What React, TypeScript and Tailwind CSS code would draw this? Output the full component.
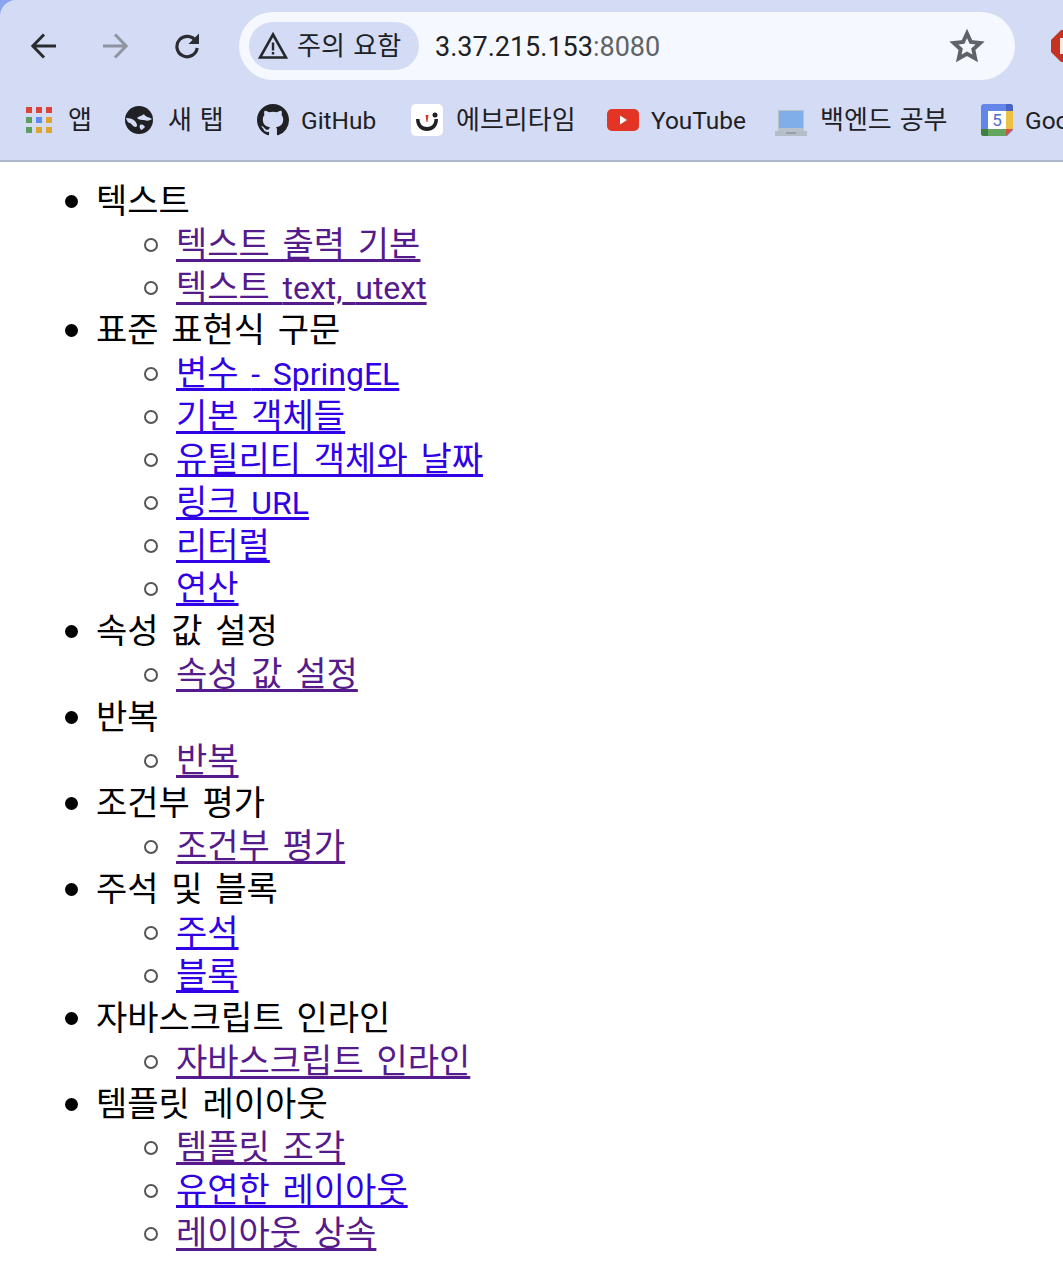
const font = "font-['Malgun_Gothic','Noto_Sans_CJK_KR','Noto_Sans',sans-serif]";

type Item = { text: string; visited: boolean };
type Section = { title: string; items: Item[] };

const sections: Section[] = [
  {
    title: "텍스트",
    items: [
      { text: "텍스트 출력 기본", visited: true },
      { text: "텍스트 text, utext", visited: true },
    ],
  },
  {
    title: "표준 표현식 구문",
    items: [
      { text: "변수 - SpringEL", visited: false },
      { text: "기본 객체들", visited: false },
      { text: "유틸리티 객체와 날짜", visited: false },
      { text: "링크 URL", visited: false },
      { text: "리터럴", visited: false },
      { text: "연산", visited: false },
    ],
  },
  { title: "속성 값 설정", items: [{ text: "속성 값 설정", visited: true }] },
  { title: "반복", items: [{ text: "반복", visited: true }] },
  { title: "조건부 평가", items: [{ text: "조건부 평가", visited: true }] },
  {
    title: "주석 및 블록",
    items: [
      { text: "주석", visited: false },
      { text: "블록", visited: false },
    ],
  },
  { title: "자바스크립트 인라인", items: [{ text: "자바스크립트 인라인", visited: true }] },
  {
    title: "템플릿 레이아웃",
    items: [
      { text: "템플릿 조각", visited: true },
      { text: "유연한 레이아웃", visited: false },
      { text: "레이아웃 상속", visited: true },
    ],
  },
];

// hangul runs bigger than latin in the screenshot's font, so latin gets its own span
function Mixed({ text }: { text: string }) {
  return (
    <>
      {text.split(/([A-Za-z,\-]+)/).map((part, i) =>
        i % 2 === 1 ? (
          <span key={i} className="font-['Roboto',sans-serif] text-[0.94em] leading-none">
            {part}
          </span>
        ) : (
          part
        )
      )}
    </>
  );
}

function Bookmark({ icon, label, className }: { icon: React.ReactNode; label: string; className: string }) {
  return (
    <div className={`flex shrink-0 items-center ${className}`}>
      {icon}
      <span className="-translate-y-[2px] whitespace-nowrap text-[26px] leading-[32px] text-[#1f2024] [word-spacing:0.08em]">
        <Mixed text={label} />
      </span>
    </div>
  );
}

function Toolbar() {
  return (
    <div className="relative h-[162px] overflow-hidden border-b-2 border-[#aeb6cb] bg-[#d3dcf4]">
      <div className="flex h-[92px] items-center">
        <svg className="ml-[31px] size-[26px]" viewBox="0 0 26 26" fill="none" stroke="#2a2c30" strokeWidth="3">
          <path d="M25 13H2M13 1.5 1.8 13 13 24.5" />
        </svg>
        <svg className="ml-[45px] size-[26px]" viewBox="0 0 26 26" fill="none" stroke="#8f949f" strokeWidth="3">
          <path d="M1 13h23M13 1.5 24.2 13 13 24.5" />
        </svg>
        <svg className="ml-[46px] size-[26px]" viewBox="0 0 26 26" fill="none" stroke="#2a2c30" strokeWidth="3.2">
          <path d="M22 8.5A10.2 10.2 0 1 0 23.2 15" />
          <path d="M25 0.5v10.5h-10.5z" fill="#2a2c30" stroke="none" />
        </svg>
        <div className="ml-[39px] flex h-[68px] w-[776px] shrink-0 items-center rounded-full bg-[#f5f8fe] pl-[10px] pr-[30px]">
          <div className="flex h-[48px] w-[170px] shrink-0 items-center rounded-full bg-[#d3dcf4] pl-[9px]">
            <svg className="size-[30px]" viewBox="0 0 30 30" fill="none">
              <path d="M15 3.5 28 26.5H2Z" stroke="#25272b" strokeWidth="2.6" />
              <path d="M13.8 11.5h2.4v8h-2.4zM13.8 21h2.4v2.5h-2.4z" fill="#25272b" />
            </svg>
            <span className="ml-[9px] -translate-y-[2px] whitespace-nowrap text-[26px] leading-[32px] text-[#202124] [word-spacing:0.1em]">
              주의 요함
            </span>
          </div>
          <span className="ml-[16px] translate-y-[1px] font-['Roboto',sans-serif] text-[27px] leading-[36px] text-[#202124]">
            3.37.215.153<span className="text-[#5f6368]">:8080</span>
          </span>
          <svg className="ml-auto size-[36px]" viewBox="0 0 24 24" fill="none" stroke="#5f6368" strokeWidth="2.6">
            <path d="m12 3.6 2.6 5.7 6.2.7-4.6 4.2 1.3 6.1-5.5-3.1-5.5 3.1 1.3-6.1-4.6-4.2 6.2-.7Z" />
          </svg>
        </div>
      </div>
      <svg className="absolute right-[-20px] top-[30px] size-[32px]" viewBox="0 0 32 32">
        <path d="M10 0h12l10 10v12L22 32H10L0 22V10Z" fill="#c5321f" />
        <path d="M9 8h4v12h3v4H9Z" fill="#f6e8e4" />
      </svg>
      <svg className="pointer-events-none absolute left-0 top-0 size-[16px]" viewBox="0 0 16 16">
        <path d="M0 0h16A16 16 0 0 0 0 16Z" fill="#8aa4ee" />
      </svg>
      <div className="flex h-[56px] items-center">
        <Bookmark
          className="ml-[25px] w-[100px]"
          label="앱"
          icon={
            <svg className="mr-[15px] size-[28px]" viewBox="0 0 28 28">
              <path d="M1 1h6v6H1z" fill="#db4437" /><path d="M11 1h6v6h-6z" fill="#db4437" /><path d="M21 1h6v6h-6z" fill="#db4437" />
              <path d="M1 11h6v6H1z" fill="#5f9e5f" /><path d="M11 11h6v6h-6z" fill="#5b8def" /><path d="M21 11h6v6h-6z" fill="#e0a531" />
              <path d="M1 21h6v6H1z" fill="#5f9e5f" /><path d="M11 21h6v6h-6z" fill="#e0a531" /><path d="M21 21h6v6h-6z" fill="#e0a531" />
            </svg>
          }
        />
        <Bookmark
          className="w-[132px]"
          label="새 탭"
          icon={
            <svg className="mr-[15px] size-[28px]" viewBox="0 0 28 28">
              <circle cx="14" cy="14" r="14" fill="#202124" />
              <path d="M1 12c4 0 7 1 9 3 2 3 3 5 1 6-3 0-4-3-6-4-2 0-3-2-4-5ZM12 12c2-2 5-2 7-4 1 3 5 3 8 5-3 2-5 2-8 1-2 0-5 0-7-2ZM15 19c2-1 4 0 5 2-2 2-3 3-4 3-1-2-2-3-1-5Z" fill="#d3dcf4" />
            </svg>
          }
        />
        <Bookmark
          className="w-[154px]"
          label="GitHub"
          icon={
            <svg className="mr-[12px] size-[32px]" viewBox="0 0 16 16" fill="#202124">
              <path d="M8 0C3.58 0 0 3.58 0 8c0 3.54 2.29 6.53 5.47 7.59.4.07.55-.17.55-.38v-1.34c-2.23.48-2.7-1.07-2.7-1.07-.36-.93-.89-1.17-.89-1.17-.73-.5.05-.49.05-.49.8.06 1.23.83 1.23.83.72 1.22 1.87.87 2.33.66.07-.52.28-.87.5-1.07-1.77-.2-3.64-.89-3.64-3.95 0-.87.31-1.59.82-2.15-.08-.2-.36-1.02.08-2.12 0 0 .67-.21 2.2.82a7.6 7.6 0 0 1 4 0c1.53-1.04 2.2-.82 2.2-.82.44 1.1.16 1.92.08 2.12.51.56.82 1.27.82 2.15 0 3.07-1.87 3.75-3.65 3.95.29.25.54.73.54 1.48v2.2c0 .21.15.46.55.38A8 8 0 0 0 16 8c0-4.42-3.58-8-8-8Z" />
            </svg>
          }
        />
        <Bookmark
          className="w-[196px]"
          label="에브리타임"
          icon={
            <svg className="mr-[13px] size-[32px]" viewBox="0 0 32 32">
              <rect width="32" height="32" rx="5" fill="#fff" />
              <path d="M5 15c0 8 5 12 11 12s11-4 11-12h-3.5c0 5-3 8-7.5 8s-7.5-3-7.5-8Z" fill="#202124" />
              <circle cx="24" cy="11" r="2.5" fill="#202124" />
              <path d="M14.5 11h3l-1 7h-1Z" fill="#e0352b" />
            </svg>
          }
        />
        <Bookmark
          className="w-[168px]"
          label="YouTube"
          icon={
            <svg className="mr-[12px] size-[32px]" viewBox="0 0 32 32">
              <rect y="5" width="32" height="22" rx="5" fill="#e23525" />
              <path d="m13 11.5 7 4.5-7 4.5Z" fill="#fff" />
            </svg>
          }
        />
        <Bookmark
          className="w-[206px]"
          label="백엔드 공부"
          icon={
            <svg className="mr-[13px] size-[32px]" viewBox="0 0 32 32">
              <path d="M3 6h26v21H3z" fill="#b9c1cc" />
              <path d="M4 7h24v17H4z" fill="#80aee8" />
              <path d="M0 27h32v5H0z" fill="#b5bdc8" />
              <path d="M11 28h10v2H11z" fill="#98a0ac" />
            </svg>
          }
        />
        <Bookmark
          className="w-[100px]"
          label="Google Calendar"
          icon={
            <svg className="mr-[12px] size-[32px] shrink-0" viewBox="0 0 32 32">
              <path d="M0 3a3 3 0 0 1 3-3h26a3 3 0 0 1 3 3v23l-6 6H3a3 3 0 0 1-3-3Z" fill="#6486e8" />
              <path d="M25 0h4a3 3 0 0 1 3 3v4h-7z" fill="#4a63c4" />
              <path d="M25 7h7v18h-7z" fill="#ecc043" />
              <path d="M0 25h25v7H3a3 3 0 0 1-3-3Z" fill="#62a55e" />
              <path d="M0 25h7v7H3a3 3 0 0 1-3-3Z" fill="#40803f" />
              <path d="M25 25h7l-7 7Z" fill="#d9503f" />
              <path d="M7 7h18v18H7z" fill="#fff" />
              <text x="16" y="22" textAnchor="middle" fontSize="17" fill="#4a6bd0" fontFamily="Roboto, sans-serif">5</text>
            </svg>
          }
        />
      </div>
    </div>
  );
}

export default function App() {
  return (
    <div className={`h-[1272px] w-[1063px] overflow-hidden bg-white text-black ${font}`}>
      <Toolbar />
      <ul className="my-[15px] ml-[16px] list-none pl-[80px] text-[34px] leading-[43px] [word-spacing:0.15em]">
        {sections.map((section) => (
          <li
            key={section.title}
            className="relative before:absolute before:left-[-31px] before:top-[18px] before:size-[13px] before:rounded-full before:bg-black"
          >
            {section.title}
            <ul className="list-none pl-[80px]">
              {section.items.map((item) => (
                <li
                  key={item.text}
                  className="relative before:absolute before:left-[-32px] before:top-[18px] before:size-[14px] before:rounded-full before:border-2 before:border-[#555555]"
                >
                  <a
                    href="#"
                    className={`underline decoration-[3px] underline-offset-[3px] ${item.visited ? "text-[#551a8b]" : "text-[#3000e6]"}`}
                  >
                    <Mixed text={item.text} />
                  </a>
                </li>
              ))}
            </ul>
          </li>
        ))}
      </ul>
    </div>
  );
}
